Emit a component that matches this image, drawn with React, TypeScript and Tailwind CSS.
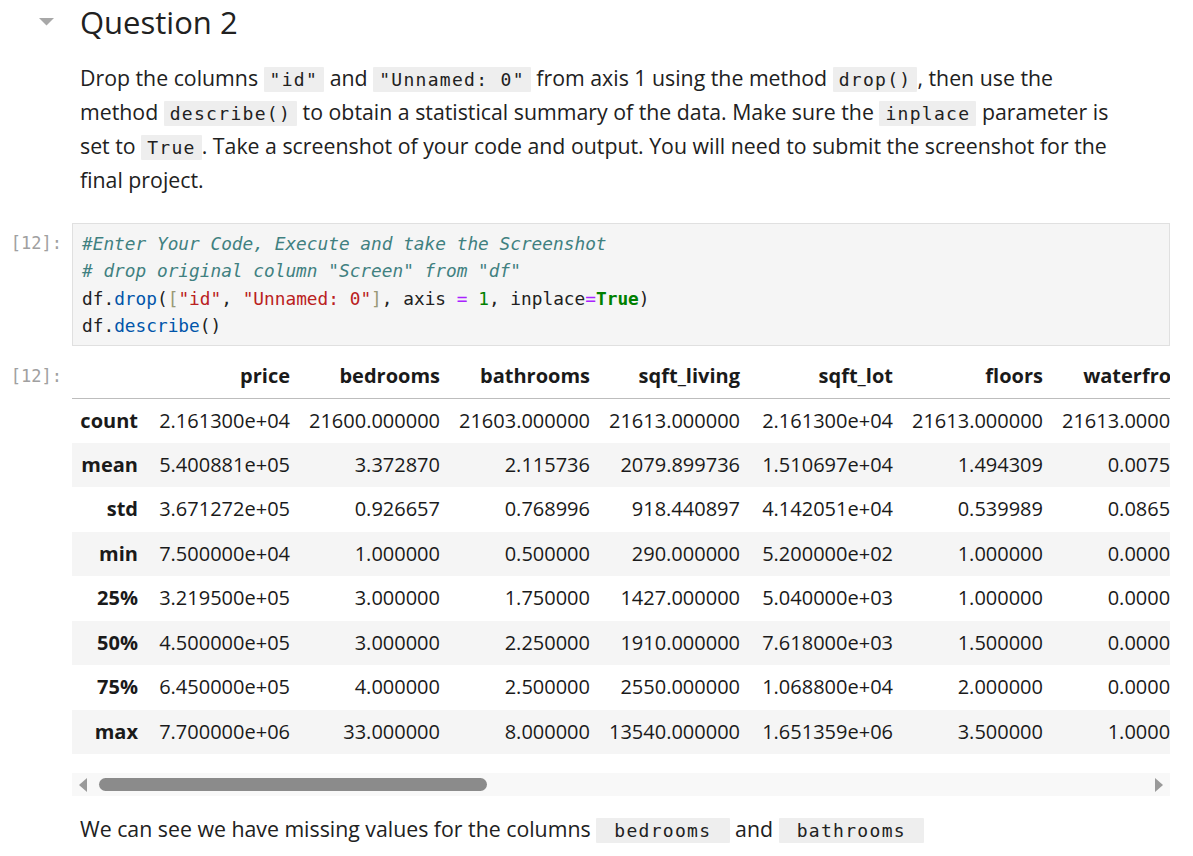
const COLS = ["price", "bedrooms", "bathrooms", "sqft_living", "sqft_lot", "floors", "waterfront"];

// describe() output, one row per statistic
const ROWS: [string, string[]][] = [
  ["count", ["2.161300e+04", "21600.000000", "21603.000000", "21613.000000", "2.161300e+04", "21613.000000", "21613.000000"]],
  ["mean", ["5.400881e+05", "3.372870", "2.115736", "2079.899736", "1.510697e+04", "1.494309", "0.007542"]],
  ["std", ["3.671272e+05", "0.926657", "0.768996", "918.440897", "4.142051e+04", "0.539989", "0.086517"]],
  ["min", ["7.500000e+04", "1.000000", "0.500000", "290.000000", "5.200000e+02", "1.000000", "0.000000"]],
  ["25%", ["3.219500e+05", "3.000000", "1.750000", "1427.000000", "5.040000e+03", "1.000000", "0.000000"]],
  ["50%", ["4.500000e+05", "3.000000", "2.250000", "1910.000000", "7.618000e+03", "1.500000", "0.000000"]],
  ["75%", ["6.450000e+05", "4.000000", "2.500000", "2550.000000", "1.068800e+04", "2.000000", "0.000000"]],
  ["max", ["7.700000e+06", "33.000000", "8.000000", "13540.000000", "1.651359e+06", "3.500000", "1.000000"]],
];

const COL_WIDTHS = [76, 152, 150, 150, 150, 153, 150, 150];

function Code({ children }: { children: React.ReactNode }) {
  return (
    <span className="rounded-[1px] bg-[#eeeeee] px-[6px] py-[2px] font-['DejaVu_Sans_Mono',monospace] text-[18px] leading-none tracking-[1.3px] text-[#212121]">
      {children}
    </span>
  );
}

function Prompt({ children, className = "" }: { children: React.ReactNode; className?: string }) {
  return (
    <div
      className={`w-[72px] shrink-0 pr-[10px] text-right font-['DejaVu_Sans_Mono',monospace] text-[17px] text-[#a0a0a0] ${className}`}
    >
      {children}
    </div>
  );
}

export default function App() {
  return (
    <div className="h-[856px] w-[1193px] overflow-hidden bg-white font-['Open_Sans',sans-serif] text-[#212121]">
      {/* ── Heading ─────────────────────────── */}
      <div className="flex h-[44px] items-center">
        <div className="w-[80px] shrink-0 pl-[39px]">
          <svg width="15" height="8" viewBox="0 0 15 8">
            <path d="M0 0 L15 0 L7.5 7.5 Z" fill="#a8a8a8" />
          </svg>
        </div>
        <h2 className="text-[31px] leading-[44px] font-normal">Question 2</h2>
      </div>

      {/* ── Markdown text ───────────────────── */}
      <p className="mt-[17px] ml-[80px] whitespace-nowrap text-[21.3px] leading-[34px]">
        Drop the columns <Code>"id"</Code> and <Code>"Unnamed: 0"</Code> from axis 1 using the method{" "}
        <Code>drop()</Code>, then use the
        <br />
        method <Code>describe()</Code> to obtain a statistical summary of the data. Make sure the{" "}
        <Code>inplace</Code> parameter is
        <br />
        set to <Code>True</Code>. Take a screenshot of your code and output. You will need to submit the screenshot for the
        <br />
        final project.
      </p>

      {/* ── Code cell ───────────────────────── */}
      <div className="mt-[26px] flex">
        <Prompt className="pt-[7px] leading-[27.3px]">[12]:</Prompt>
        <div className="w-[1098px] border border-[#e0e0e0] bg-[#f5f5f5] px-[9px] py-[6px]">
          <pre className="font-['DejaVu_Sans_Mono',monospace] text-[17.8px] leading-[27.3px] text-[#212121]">
            <span className="italic text-[#408080]">#Enter Your Code, Execute and take the Screenshot</span>
            {"\n"}
            <span className="italic text-[#408080]"># drop original column "Screen" from "df"</span>
            {"\n"}
            df.<span className="text-[#0055aa]">drop</span>(<span className="text-[#999977]">[</span>
            <span className="text-[#ba2121]">"id"</span>, <span className="text-[#ba2121]">"Unnamed: 0"</span>
            <span className="text-[#999977]">]</span>, axis <span className="text-[#aa22ff]">=</span>{" "}
            <span className="text-[#008000]">1</span>, inplace<span className="text-[#aa22ff]">=</span>
            <span className="font-bold text-[#008000]">True</span>)
            {"\n"}
            df.<span className="text-[#0055aa]">describe</span>()
          </pre>
        </div>
      </div>

      {/* ── Output table ────────────────────── */}
      <div className="mt-[8px] flex">
        <Prompt className="leading-[44px]">[12]:</Prompt>
        <div className="w-[1098px] overflow-hidden">
          <table className="w-[1131px] table-fixed border-collapse text-[20px] text-[#1a1a1a]">
            <colgroup>
              {COL_WIDTHS.map((w, i) => (
                <col key={i} style={{ width: w }} />
              ))}
            </colgroup>
            <thead>
              <tr className="h-[44px] border-b border-[#bdbdbd]">
                <th />
                {COLS.map((c) => (
                  <th key={c} className="whitespace-nowrap pr-[10px] text-right font-bold">
                    {c}
                  </th>
                ))}
              </tr>
            </thead>
            <tbody>
              {ROWS.map(([label, vals], i) => (
                <tr key={label} className={`h-[44.5px] ${i % 2 === 1 ? "bg-[#f5f5f5]" : "bg-white"}`}>
                  <th className="whitespace-nowrap pr-[10px] text-right font-bold">{label}</th>
                  {vals.map((v, j) => (
                    <td key={j} className="whitespace-nowrap pr-[10px] text-right">
                      {v}
                    </td>
                  ))}
                </tr>
              ))}
            </tbody>
          </table>
        </div>
      </div>

      {/* ── Horizontal scrollbar ────────────── */}
      <div className="mt-[19px] ml-[72px] flex h-[23px] w-[1098px] items-center bg-[#f8f8f8] px-[7px]">
        <svg width="8" height="14" viewBox="0 0 8 14">
          <path d="M8 0 L8 14 L0 7 Z" fill="#9a9a9a" />
        </svg>
        <div className="ml-[12px] h-[13px] w-[388px] rounded-full bg-[#8b8b8b]" />
        <div className="flex-1" />
        <svg width="8" height="14" viewBox="0 0 8 14">
          <path d="M0 0 L0 14 L8 7 Z" fill="#9a9a9a" />
        </svg>
      </div>

      {/* ── Closing note ────────────────────── */}
      <p className="mt-[16px] ml-[80px] whitespace-nowrap text-[21.3px] leading-[34px]">
        We can see we have missing values for the columns <Code>&nbsp;bedrooms&nbsp;</Code> and{" "}
        <Code>&nbsp;bathrooms&nbsp;</Code>
      </p>
    </div>
  );
}
